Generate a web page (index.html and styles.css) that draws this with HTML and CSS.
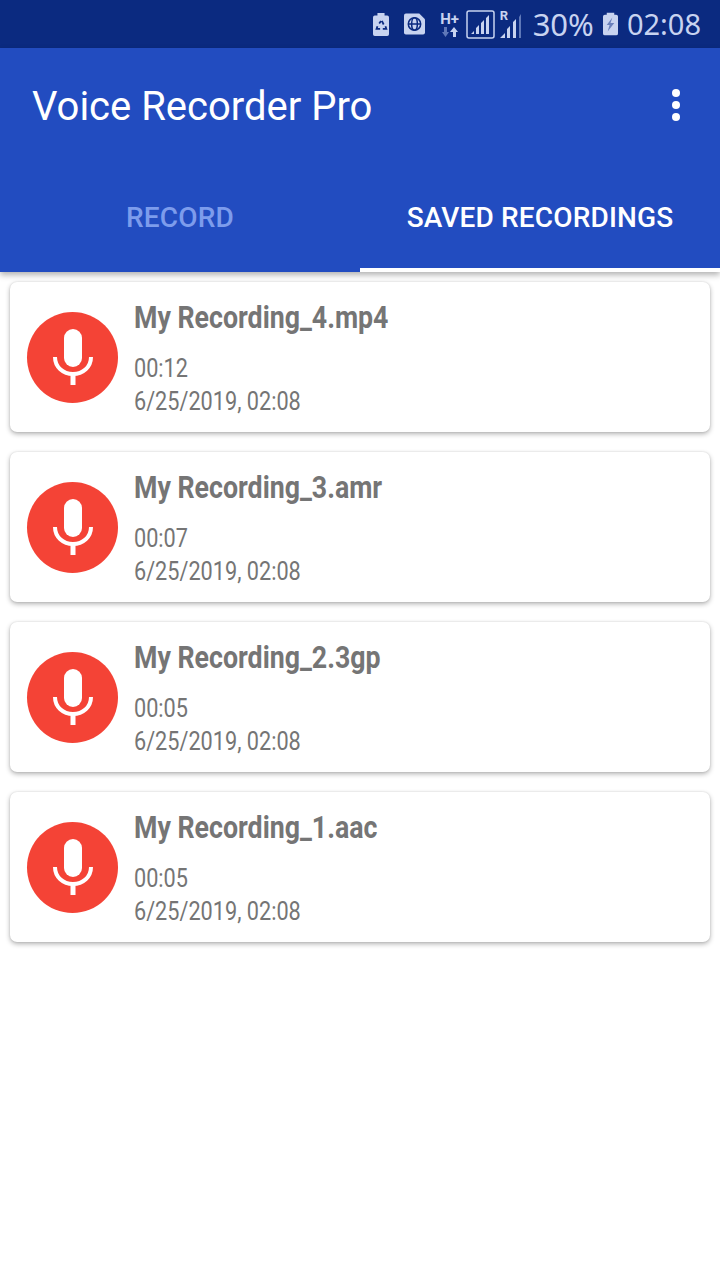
FILE: index.html
```html
<!DOCTYPE html>
<html lang="en">
<head>
<meta charset="utf-8">
<title>Voice Recorder Pro</title>
<link rel="stylesheet" href="styles.css">
</head>
<body>
<div class="status">
  <svg class="ico" width="16" height="25" viewBox="0 0 18 26"><path fill="#c8d3f0" d="M5 0h8v3h3a2 2 0 0 1 2 2v19a2 2 0 0 1-2 2H2a2 2 0 0 1-2-2V5a2 2 0 0 1 2-2h3z"/><path fill="none" stroke="#0b2a80" stroke-width="2" d="M9 9l-2 3M10 9l2 4M5 15l-1 3h4M14 15l1 3h-4"/></svg>
  <svg class="ico ico-b" width="21" height="22" viewBox="0 0 22 22"><path fill="#c8d3f0" d="M2 0h14l6 6v14a2 2 0 0 1-2 2H2a2 2 0 0 1-2-2V2a2 2 0 0 1 2-2z"/><g fill="none" stroke="#0b2a80" stroke-width="1.6"><circle cx="11" cy="11" r="6.5"/><ellipse cx="11" cy="11" rx="3" ry="6.5"/><path d="M4.5 11h13"/></g></svg>
  <div class="hplus"><span class="hplus-t">H+</span>
    <svg width="16" height="10" viewBox="0 0 16 10"><path fill="#5f78b8" d="M2 0h3v5h2L3.500 10 0 5h2z"/><path fill="#c8d3f0" d="M12 0l4 5h-2v5h-3V5H8z"/></svg>
  </div>
  <svg class="ico ico-c" width="29" height="29" viewBox="0 0 29 29"><rect x="1" y="1" width="27" height="27" rx="2" fill="none" stroke="#c8d3f0" stroke-width="1.500"/><path fill="#c8d3f0" d="M5 24l3-3v3zM10 24v-6l3-3v9zM15 24V13l3-3v14zM20 24V8l3-3v19z"/></svg>
  <div class="sim2"><span class="sim2-r">R</span>
    <svg width="24" height="26" viewBox="0 0 24 26"><path fill="#c8d3f0" d="M0 25l5-5v5zM7 25v-9l3-3v12zM13 25V9l3-3v19z"/><path fill="#5f78b8" d="M19 25V4l2-3v24z"/></svg>
  </div>
  <span class="stat-text pct">30%</span>
  <svg class="ico ico-d" width="15" height="24" viewBox="0 0 16 24"><path fill="#c8d3f0" d="M4 0h8v2h2a2 2 0 0 1 2 2v18a2 2 0 0 1-2 2H2a2 2 0 0 1-2-2V4a2 2 0 0 1 2-2h2z"/><path fill="#6a80bc" d="M10 5L4 13h3l-2 7 7-9H8z"/></svg>
  <span class="stat-text">02:08</span>
</div>
<header class="appbar">
  <div class="toolbar">
    <h1 class="title">Voice Recorder Pro</h1>
    <div class="more"><i></i><i></i><i></i></div>
  </div>
  <nav class="tabs">
    <div class="tab">RECORD</div>
    <div class="tab tab-active">SAVED RECORDINGS</div>
  </nav>
</header>
<main class="list">
  <article class="card">
    <div class="avatar"><svg width="40" height="56" viewBox="0 0 40 56"><rect x="11" y="0" width="18" height="38" rx="9" fill="#fff"/><path d="M2 28c0 10 8 17 18 17s18-7 18-17" fill="none" stroke="#fff" stroke-width="4"/><rect x="17.500" y="44" width="5" height="12" fill="#fff"/></svg></div>
    <div class="info"><div class="name"><span>My Recording_4.mp4</span></div><div class="meta"><span>00:12</span></div><div class="meta"><span>6/25/2019, 02:08</span></div></div>
  </article>
  <article class="card">
    <div class="avatar"><svg width="40" height="56" viewBox="0 0 40 56"><rect x="11" y="0" width="18" height="38" rx="9" fill="#fff"/><path d="M2 28c0 10 8 17 18 17s18-7 18-17" fill="none" stroke="#fff" stroke-width="4"/><rect x="17.500" y="44" width="5" height="12" fill="#fff"/></svg></div>
    <div class="info"><div class="name"><span>My Recording_3.amr</span></div><div class="meta"><span>00:07</span></div><div class="meta"><span>6/25/2019, 02:08</span></div></div>
  </article>
  <article class="card">
    <div class="avatar"><svg width="40" height="56" viewBox="0 0 40 56"><rect x="11" y="0" width="18" height="38" rx="9" fill="#fff"/><path d="M2 28c0 10 8 17 18 17s18-7 18-17" fill="none" stroke="#fff" stroke-width="4"/><rect x="17.500" y="44" width="5" height="12" fill="#fff"/></svg></div>
    <div class="info"><div class="name"><span>My Recording_2.3gp</span></div><div class="meta"><span>00:05</span></div><div class="meta"><span>6/25/2019, 02:08</span></div></div>
  </article>
  <article class="card">
    <div class="avatar"><svg width="40" height="56" viewBox="0 0 40 56"><rect x="11" y="0" width="18" height="38" rx="9" fill="#fff"/><path d="M2 28c0 10 8 17 18 17s18-7 18-17" fill="none" stroke="#fff" stroke-width="4"/><rect x="17.500" y="44" width="5" height="12" fill="#fff"/></svg></div>
    <div class="info"><div class="name"><span>My Recording_1.aac</span></div><div class="meta"><span>00:05</span></div><div class="meta"><span>6/25/2019, 02:08</span></div></div>
  </article>
</main>
</body>
</html>
```
FILE: styles.css
```css
* { box-sizing: border-box; }
html, body { margin: 0; padding: 0; }
body { width: 720px; height: 1280px; background: #fff; overflow: hidden; font-family: Roboto, sans-serif; }
.status { height: 48px; background: #0b2a80; display: flex; align-items: center; justify-content: flex-end; padding-right: 19px; color: #c8d3f0; }
.stat-text { font-family: "Noto Sans", sans-serif; font-size: 29px; line-height: 48px; }
.pct { margin-left: 9px; font-size: 31px; }
.ico { display: block; }
.ico-b { margin-left: 15px; }
.ico-c { margin-left: 7px; }
.ico-d { margin-left: 9px; margin-right: 9px; }
.hplus { margin-left: 16px; width: 18px; display: flex; flex-direction: column; align-items: center; }
.hplus-t { font-size: 15px; font-weight: 700; line-height: 16px; }
.sim2 { position: relative; margin-left: 5px; width: 24px; height: 29px; display: flex; align-items: flex-end; }
.sim2-r { position: absolute; left: 0; top: -2px; font-size: 13px; font-weight: 700; line-height: 16px; }
.appbar { height: 224px; background: #224cc0; color: #fff; box-shadow: 0 3px 6px rgba(0,0,0,.3); position: relative; }
.toolbar { height: 112px; display: flex; align-items: center; justify-content: space-between; padding: 4px 40px 0 32px; }
.title { margin: 0; font-size: 40px; font-weight: 400; letter-spacing: 0; }
.more { display: flex; flex-direction: column; gap: 4px; margin-top: -2px; }
.more i { display: block; width: 8px; height: 8px; border-radius: 50%; background: #fff; }
.tabs { display: flex; height: 112px; }
.tab { flex: 1; display: flex; align-items: center; justify-content: center; font-size: 28px; font-weight: 500; letter-spacing: .15px; color: #7d9cec; padding-top: 6px; border-bottom: 4px solid transparent; }
.tab-active { color: #fff; border-bottom-color: #fff; }
.list { display: flex; flex-direction: column; gap: 20px; padding: 10px 10px 0; }
.card { height: 150px; background: #fff; border-radius: 7px; box-shadow: 0 2px 5px rgba(0,0,0,.3), 0 0 2px rgba(0,0,0,.12); display: flex; align-items: center; padding-left: 17px; }
.avatar { width: 91px; height: 91px; border-radius: 50%; background: #f44336; display: flex; align-items: center; justify-content: center; flex: none; }
.info { margin-left: 16px; padding-top: 2px; align-self: flex-start; color: #757575; }
.name { font-size: 31px; font-weight: 700; line-height: 36px; margin-top: 16px; margin-bottom: 16px; }
.meta { font-size: 25px; line-height: 33px; }
.name span { display: inline-block; transform: scaleX(.862); transform-origin: left center; white-space: nowrap; }
.meta span { display: inline-block; transform: scaleX(.867); transform-origin: left center; white-space: nowrap; }
```
